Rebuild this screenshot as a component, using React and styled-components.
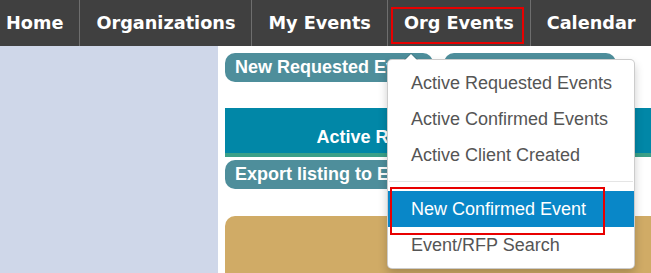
import styled, { createGlobalStyle } from 'styled-components';

const GlobalStyle = createGlobalStyle`
  html, body {
    margin: 0;
    padding: 0;
    background: #ffffff;
    overflow: hidden;
  }
  * { box-sizing: border-box; }
`;

const Page = styled.div`
  position: relative;
  width: 651px;
  height: 273px;
  overflow: hidden;
  font-family: 'Liberation Sans', Arial, sans-serif;
`;

const NavBar = styled.nav`
  display: flex;
  height: 46px;
  background: #404040;
`;

const NavItem = styled.div`
  position: relative;
  display: flex;
  align-items: center;
  padding: 0 16px 0 ${(p) => (p.$first ? '6px' : '16px')};
  border-right: 1px solid #6e6e6e;
  color: #ffffff;
  font-family: 'DejaVu Sans', Verdana, sans-serif;
  font-weight: 700;
  font-size: 17.7px;
  white-space: nowrap;

  ${(p) =>
    p.$marked &&
    `
    &::after {
      content: '';
      position: absolute;
      left: 3px;
      right: 6px;
      top: 7px;
      bottom: 2px;
      border: 2px solid #e80000;
    }
  `}
`;

const Body = styled.div`
  display: flex;
  height: 227px;
`;

const Sidebar = styled.aside`
  width: 218px;
  flex-shrink: 0;
  background: #cfd7e9;
`;

const Main = styled.main`
  flex: 1;
  min-width: 0;
  margin-left: 7px;
  padding-top: 7px;
  display: flex;
  flex-direction: column;
`;

const PillRow = styled.div`
  display: flex;
  gap: 11px;
`;

const Pill = styled.div`
  align-self: flex-start;
  height: 29px;
  line-height: 29px;
  padding: 0 ${(p) => p.$pad || 10}px;
  border-radius: 10px;
  background: #4e8e9b;
  color: #ffffff;
  font-weight: 700;
  font-size: 18px;
  white-space: nowrap;
`;

const Banner = styled.div`
  margin-top: 26px;
  height: 49px;
  display: flex;
  align-items: flex-end;
  justify-content: center;
  padding-bottom: 6px;
  background: #0187a7;
  border-bottom: 4px solid #3ba088;
  color: #ffffff;
  font-weight: 700;
  font-size: 18px;
  line-height: 20px;
  white-space: nowrap;
`;

const ExportPill = styled(Pill)`
  margin-top: 3px;
`;

const Panel = styled.div`
  margin-top: 27px;
  flex: 1;
  background: #d0ab66;
  border-radius: 10px 0 0 0;
`;

const Menu = styled.div`
  position: absolute;
  left: 387px;
  top: 59px;
  width: 248px;
  padding: 5px 0;
  background: #ffffff;
  border: 1px solid rgba(0, 0, 0, 0.2);
  border-radius: 5px;
  box-shadow: 0 5px 10px rgba(0, 0, 0, 0.2);

  &::before {
    content: '';
    position: absolute;
    left: 16px;
    top: -7px;
    border-left: 7px solid transparent;
    border-right: 7px solid transparent;
    border-bottom: 7px solid rgba(0, 0, 0, 0.2);
  }

  &::after {
    content: '';
    position: absolute;
    left: 17px;
    top: -6px;
    border-left: 6px solid transparent;
    border-right: 6px solid transparent;
    border-bottom: 6px solid #ffffff;
  }
`;

const MenuItem = styled.div`
  position: relative;
  height: 36px;
  line-height: 36px;
  padding: 0 23px;
  font-size: 18px;
  color: ${(p) => (p.$active ? '#ffffff' : '#555555')};
  background: ${(p) => (p.$active ? '#0987c8' : 'transparent')};
  white-space: nowrap;

  ${(p) =>
    p.$marked &&
    `
    &::after {
      content: '';
      position: absolute;
      left: 2px;
      top: -4px;
      width: 211px;
      height: 44px;
      border: 2px solid #e80000;
    }
  `}
`;

const Divider = styled.div`
  height: 1px;
  margin: 8px 1px 9px;
  background: #e5e5e5;
`;

const navLinks = ['Home', 'Organizations', 'My Events', 'Org Events', 'Calendar'];

const menuItems = [
  { label: 'Active Requested Events' },
  { label: 'Active Confirmed Events' },
  { label: 'Active Client Created' },
  { divider: true },
  { label: 'New Confirmed Event', active: true },
  { label: 'Event/RFP Search' },
];

export default function App() {
  return (
    <>
      <GlobalStyle />
      <Page>
        <NavBar>
          {navLinks.map((link, i) => (
            <NavItem key={link} $first={i === 0} $marked={link === 'Org Events'}>
              {link}
            </NavItem>
          ))}
        </NavBar>
        <Body>
          <Sidebar />
          <Main>
            <PillRow>
              <Pill>New Requested Event</Pill>
              <Pill $pad={13}>New Client Event</Pill>
            </PillRow>
            <Banner>Active RFPs and Org Events</Banner>
            <ExportPill>Export listing to Excel</ExportPill>
            <Panel />
          </Main>
        </Body>
        <Menu>
          {menuItems.map((item, i) =>
            item.divider ? (
              <Divider key={i} />
            ) : (
              <MenuItem key={item.label} $active={item.active} $marked={item.active}>
                {item.label}
              </MenuItem>
            )
          )}
        </Menu>
      </Page>
    </>
  );
}
